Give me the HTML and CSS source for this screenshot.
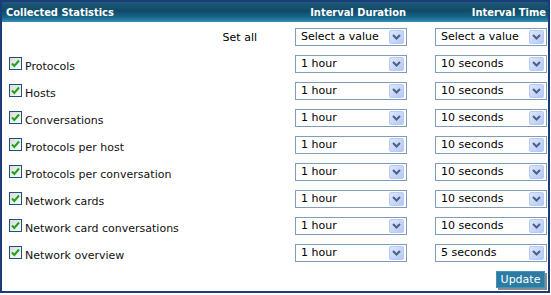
FILE: index.html
```html
<!DOCTYPE html>
<html lang="en">
<head>
    <meta charset="UTF-8">
    <title>Collected Statistics</title>
    <link rel="stylesheet" href="styles.css">
</head>
<body>

<div class="panel">

    <div class="panel-head">
        <div class="head-title">Collected Statistics</div>
        <div class="head-col">Interval Duration</div>
        <div class="head-col">Interval Time</div>
    </div>

    <div class="stats-grid">
        <div class="set-all">Set all</div>
        <div class="combo"><span class="combo-value">Select a value</span><span class="combo-arrow"><svg width="9" height="6" viewBox="0 0 9 6"><path d="M1 1 L4.5 4.5 L8 1" fill="none" stroke="#4d6185" stroke-width="2"/></svg></span></div>
        <div class="combo"><span class="combo-value">Select a value</span><span class="combo-arrow"><svg width="9" height="6" viewBox="0 0 9 6"><path d="M1 1 L4.5 4.5 L8 1" fill="none" stroke="#4d6185" stroke-width="2"/></svg></span></div>

        <label class="stat"><span class="check"><svg width="11" height="11" viewBox="0 0 11 11"><path d="M2 5.5 L4.3 8 L9 2.5" fill="none" stroke="#21a121" stroke-width="2"/></svg></span><span class="stat-name">Protocols</span></label>
        <div class="combo"><span class="combo-value">1 hour</span><span class="combo-arrow"><svg width="9" height="6" viewBox="0 0 9 6"><path d="M1 1 L4.5 4.5 L8 1" fill="none" stroke="#4d6185" stroke-width="2"/></svg></span></div>
        <div class="combo"><span class="combo-value">10 seconds</span><span class="combo-arrow"><svg width="9" height="6" viewBox="0 0 9 6"><path d="M1 1 L4.5 4.5 L8 1" fill="none" stroke="#4d6185" stroke-width="2"/></svg></span></div>

        <label class="stat"><span class="check"><svg width="11" height="11" viewBox="0 0 11 11"><path d="M2 5.5 L4.3 8 L9 2.5" fill="none" stroke="#21a121" stroke-width="2"/></svg></span><span class="stat-name">Hosts</span></label>
        <div class="combo"><span class="combo-value">1 hour</span><span class="combo-arrow"><svg width="9" height="6" viewBox="0 0 9 6"><path d="M1 1 L4.5 4.5 L8 1" fill="none" stroke="#4d6185" stroke-width="2"/></svg></span></div>
        <div class="combo"><span class="combo-value">10 seconds</span><span class="combo-arrow"><svg width="9" height="6" viewBox="0 0 9 6"><path d="M1 1 L4.5 4.5 L8 1" fill="none" stroke="#4d6185" stroke-width="2"/></svg></span></div>

        <label class="stat"><span class="check"><svg width="11" height="11" viewBox="0 0 11 11"><path d="M2 5.5 L4.3 8 L9 2.5" fill="none" stroke="#21a121" stroke-width="2"/></svg></span><span class="stat-name">Conversations</span></label>
        <div class="combo"><span class="combo-value">1 hour</span><span class="combo-arrow"><svg width="9" height="6" viewBox="0 0 9 6"><path d="M1 1 L4.5 4.5 L8 1" fill="none" stroke="#4d6185" stroke-width="2"/></svg></span></div>
        <div class="combo"><span class="combo-value">10 seconds</span><span class="combo-arrow"><svg width="9" height="6" viewBox="0 0 9 6"><path d="M1 1 L4.5 4.5 L8 1" fill="none" stroke="#4d6185" stroke-width="2"/></svg></span></div>

        <label class="stat"><span class="check"><svg width="11" height="11" viewBox="0 0 11 11"><path d="M2 5.5 L4.3 8 L9 2.5" fill="none" stroke="#21a121" stroke-width="2"/></svg></span><span class="stat-name">Protocols per host</span></label>
        <div class="combo"><span class="combo-value">1 hour</span><span class="combo-arrow"><svg width="9" height="6" viewBox="0 0 9 6"><path d="M1 1 L4.5 4.5 L8 1" fill="none" stroke="#4d6185" stroke-width="2"/></svg></span></div>
        <div class="combo"><span class="combo-value">10 seconds</span><span class="combo-arrow"><svg width="9" height="6" viewBox="0 0 9 6"><path d="M1 1 L4.5 4.5 L8 1" fill="none" stroke="#4d6185" stroke-width="2"/></svg></span></div>

        <label class="stat"><span class="check"><svg width="11" height="11" viewBox="0 0 11 11"><path d="M2 5.5 L4.3 8 L9 2.5" fill="none" stroke="#21a121" stroke-width="2"/></svg></span><span class="stat-name">Protocols per conversation</span></label>
        <div class="combo"><span class="combo-value">1 hour</span><span class="combo-arrow"><svg width="9" height="6" viewBox="0 0 9 6"><path d="M1 1 L4.5 4.5 L8 1" fill="none" stroke="#4d6185" stroke-width="2"/></svg></span></div>
        <div class="combo"><span class="combo-value">10 seconds</span><span class="combo-arrow"><svg width="9" height="6" viewBox="0 0 9 6"><path d="M1 1 L4.5 4.5 L8 1" fill="none" stroke="#4d6185" stroke-width="2"/></svg></span></div>

        <label class="stat"><span class="check"><svg width="11" height="11" viewBox="0 0 11 11"><path d="M2 5.5 L4.3 8 L9 2.5" fill="none" stroke="#21a121" stroke-width="2"/></svg></span><span class="stat-name">Network cards</span></label>
        <div class="combo"><span class="combo-value">1 hour</span><span class="combo-arrow"><svg width="9" height="6" viewBox="0 0 9 6"><path d="M1 1 L4.5 4.5 L8 1" fill="none" stroke="#4d6185" stroke-width="2"/></svg></span></div>
        <div class="combo"><span class="combo-value">10 seconds</span><span class="combo-arrow"><svg width="9" height="6" viewBox="0 0 9 6"><path d="M1 1 L4.5 4.5 L8 1" fill="none" stroke="#4d6185" stroke-width="2"/></svg></span></div>

        <label class="stat"><span class="check"><svg width="11" height="11" viewBox="0 0 11 11"><path d="M2 5.5 L4.3 8 L9 2.5" fill="none" stroke="#21a121" stroke-width="2"/></svg></span><span class="stat-name">Network card conversations</span></label>
        <div class="combo"><span class="combo-value">1 hour</span><span class="combo-arrow"><svg width="9" height="6" viewBox="0 0 9 6"><path d="M1 1 L4.5 4.5 L8 1" fill="none" stroke="#4d6185" stroke-width="2"/></svg></span></div>
        <div class="combo"><span class="combo-value">10 seconds</span><span class="combo-arrow"><svg width="9" height="6" viewBox="0 0 9 6"><path d="M1 1 L4.5 4.5 L8 1" fill="none" stroke="#4d6185" stroke-width="2"/></svg></span></div>

        <label class="stat"><span class="check"><svg width="11" height="11" viewBox="0 0 11 11"><path d="M2 5.5 L4.3 8 L9 2.5" fill="none" stroke="#21a121" stroke-width="2"/></svg></span><span class="stat-name">Network overview</span></label>
        <div class="combo"><span class="combo-value">1 hour</span><span class="combo-arrow"><svg width="9" height="6" viewBox="0 0 9 6"><path d="M1 1 L4.5 4.5 L8 1" fill="none" stroke="#4d6185" stroke-width="2"/></svg></span></div>
        <div class="combo"><span class="combo-value">5 seconds</span><span class="combo-arrow"><svg width="9" height="6" viewBox="0 0 9 6"><path d="M1 1 L4.5 4.5 L8 1" fill="none" stroke="#4d6185" stroke-width="2"/></svg></span></div>

        <button class="update-button">Update</button>
    </div>

</div>

</body>
</html>
```

FILE: styles.css
```css
body {
    margin: 0;
    background-color: white;
    font-family: "DejaVu Sans", Verdana, sans-serif;
    font-size: 11px;
    color: #000;
}

.panel {
    width: 550px;
    height: 293px;
    box-sizing: border-box;
    border: 2px solid #1b3c78;
    background-color: white;
}

/* header bar with the column titles */
.panel-head {
    display: grid;
    grid-template-columns: 1fr 112px 112px;
    column-gap: 28px;
    align-items: center;
    height: 20px;
    padding: 0 2px 0 4px;
    background: linear-gradient(to bottom, #1d5a78 0%, #0f4a66 45%, #18648a 75%, #3590b5 100%);
    color: white;
    font-family: "DejaVu Sans Condensed", "DejaVu Sans", sans-serif;
    font-stretch: condensed;
    font-weight: bold;
    font-size: 11px;
}

.head-col {
    text-align: right;
    white-space: nowrap;
}

.stats-grid {
    display: grid;
    grid-template-columns: 1fr 112px 112px;
    grid-auto-rows: 18px;
    column-gap: 28px;
    row-gap: 9px;
    padding: 6px 1px 0 7px;
}

.set-all {
    align-self: center;
    text-align: right;
    padding-right: 10px;
}

.stat {
    display: flex;
    align-items: flex-start;
    color: #111;
    white-space: nowrap;
}

.check {
    display: flex;
    align-items: center;
    justify-content: center;
    width: 11px;
    height: 11px;
    margin-top: 2px;
    border: 1px solid #1c5180;
    background: linear-gradient(135deg, #dcdcd7, #fbfbf9);
}

.stat-name {
    margin-top: 5px;
    margin-left: 3px;
    line-height: 13px;
}

/* fake dropdown, xp look */
.combo {
    display: flex;
    align-items: center;
    justify-content: space-between;
    border: 1px solid #7f9db9;
    background-color: white;
    padding-left: 5px;
}

.combo-value {
    line-height: 16px;
    white-space: nowrap;
}

.combo-arrow {
    display: flex;
    align-items: center;
    justify-content: center;
    width: 15px;
    height: 14px;
    margin-right: 2px;
    box-sizing: border-box;
    border: 1px solid #b9c9ef;
    border-radius: 2px;
    background: linear-gradient(135deg, #dde8fd, #b5c8f5);
}

.update-button {
    grid-column: 3;
    justify-self: end;
    width: 49px;
    height: 17px;
    margin-right: 2px;
    padding: 0;
    border: 1px solid #4390b6;
    background-color: #2b7ca3;
    color: white;
    font-family: "DejaVu Sans", Verdana, sans-serif;
    font-size: 11px;
    box-shadow: 2px 2px 0 #8a8a88;
    cursor: pointer;
}
```
